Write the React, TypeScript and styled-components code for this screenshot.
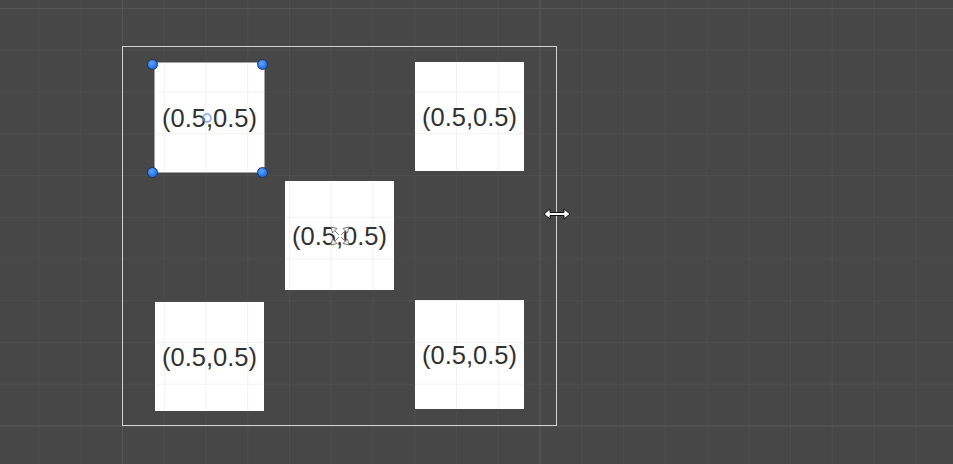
import { FC } from "react";
import styled, { createGlobalStyle, css } from "styled-components";

const STEP = 41.75;
const MAJOR = STEP * 10;

const GlobalStyle = createGlobalStyle`
  html,
  body {
    margin: 0;
    padding: 0;
    background-color: #474747;
  }
`;

type Item = {
  left: number;
  top: number;
  selected?: boolean;
  anchor?: boolean;
};

// rects sit freely on the scene canvas, so their place is data
const items: Array<Item> = [
  { left: 155, top: 63, selected: true },
  { left: 415, top: 62 },
  { left: 285, top: 181, anchor: true },
  { left: 155, top: 302 },
  { left: 415, top: 300 },
];

const gridLines = (minor: string, major: string) => css`
  background-image: linear-gradient(to right, ${major} 1px, transparent 1px),
    linear-gradient(to bottom, ${major} 1px, transparent 1px),
    linear-gradient(to right, ${minor} 1px, transparent 1px),
    linear-gradient(to bottom, ${minor} 1px, transparent 1px);
  background-size: ${MAJOR}px ${MAJOR}px, ${MAJOR}px ${MAJOR}px,
    ${STEP}px ${STEP}px, ${STEP}px ${STEP}px;
  background-position: 122px 8px, 122px 8px, 122px 8px, 122px 8px;
  background-attachment: fixed;
`;

const App: FC = () => {
  return (
    <>
      <GlobalStyle />
      <SceneView>
        <CanvasFrame />
        {items.map((item, i) => (
          <RectItem
            key={i}
            $selected={item.selected}
            style={{ left: item.left, top: item.top }}
          >
            <Label>(0.5,0.5)</Label>
            {item.selected && (
              <>
                <Handle $x="left" $y="top" />
                <Handle $x="right" $y="top" />
                <Handle $x="left" $y="bottom" />
                <Handle $x="right" $y="bottom" />
                <Pivot />
              </>
            )}
            {item.anchor && (
              <AnchorIcon viewBox="0 0 22 22" width="22" height="22">
                <g
                  stroke="#7c7c7c"
                  strokeWidth="1"
                  fill="#f2f2f2"
                  strokeLinejoin="round"
                >
                  <path d="M10 10 L4 4 M12 10 L18 4 M10 12 L4 18 M12 12 L18 18" />
                  <path d="M2 2 L8 3.5 L3.5 8 Z" />
                  <path d="M20 2 L14 3.5 L18.5 8 Z" />
                  <path d="M2 20 L8 18.5 L3.5 14 Z" />
                  <path d="M20 20 L14 18.5 L18.5 14 Z" />
                </g>
              </AnchorIcon>
            )}
          </RectItem>
        ))}
        <ResizeCursor viewBox="0 0 28 12" width="28" height="12">
          <path
            d="M1 6 L7 1 L7 4.5 L21 4.5 L21 1 L27 6 L21 11 L21 7.5 L7 7.5 L7 11 Z"
            fill="#ffffff"
            stroke="#111111"
            strokeWidth="1"
          />
        </ResizeCursor>
      </SceneView>
    </>
  );
};

export default App;

const SceneView = styled.div`
  position: relative;
  width: 953px;
  height: 464px;
  overflow: hidden;

  background-color: #474747;
  ${gridLines("#4e4e4e", "#575757")}
`;

const CanvasFrame = styled.div`
  position: absolute;
  left: 122px;
  top: 46px;
  width: 433px;
  height: 378px;

  border: 1px solid #d2d2d2;
`;

const RectItem = styled.div<{ $selected?: boolean }>`
  position: absolute;
  width: 109px;
  height: 109px;

  display: flex;
  align-items: center;
  justify-content: center;

  background-color: #ffffff;
  ${gridLines("#f1f1f1", "#f1f1f1")}

  ${({ $selected }) =>
    $selected &&
    css`
      box-shadow: 0 0 0 1px #a4a4a4;
    `}
`;

const Label = styled.span`
  font-family: "Liberation Sans", Arial, sans-serif;
  font-size: 25.5px;
  line-height: 1;
  color: #313131;
  white-space: nowrap;
  padding-top: 3px;
`;

const Handle = styled.span<{ $x: "left" | "right"; $y: "top" | "bottom" }>`
  position: absolute;
  width: 9px;
  height: 9px;
  ${({ $x }) => ($x === "left" ? "left: -8px;" : "right: -4px;")}
  ${({ $y }) => ($y === "top" ? "top: -4px;" : "bottom: -6px;")}

  border-radius: 50%;
  border: 1px solid #1d3558;
  background: radial-gradient(circle at 40% 35%, #5ea6ff 0%, #2a76ea 60%, #1f5fc4 100%);
`;

const Pivot = styled.span`
  position: absolute;
  left: 47px;
  top: 50px;
  width: 6px;
  height: 6px;

  border-radius: 50%;
  border: 2px solid rgba(105, 155, 225, 0.7);
`;

const AnchorIcon = styled.svg`
  position: absolute;
  left: 44px;
  top: 44px;
`;

const ResizeCursor = styled.svg`
  position: absolute;
  left: 543px;
  top: 208px;
`;
